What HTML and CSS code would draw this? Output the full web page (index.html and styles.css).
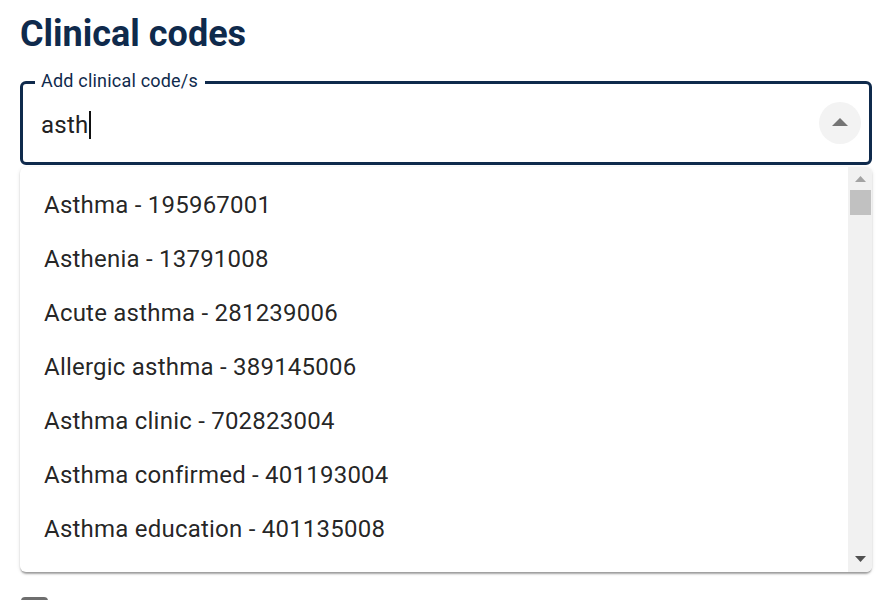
FILE: index.html
```html
<!DOCTYPE html>
<html lang="en">
<head>
<meta charset="utf-8">
<title>Clinical codes</title>
<link rel="stylesheet" href="styles.css">
</head>
<body>
<main class="page">
  <h1 class="title">Clinical codes</h1>
  <fieldset class="field">
    <legend class="field-label">Add clinical code/s</legend>
    <div class="field-row">
      <div class="field-input"><span class="typed">asth</span><span class="caret"></span></div>
      <button class="toggle" type="button" aria-label="Close">
        <svg width="16" height="8" viewBox="0 0 16 8"><path d="M0 8 L8 0 L16 8 Z" fill="#757575"/></svg>
      </button>
    </div>
  </fieldset>
  <div class="menu">
    <ul class="options">
      <li class="option">Asthma - 195967001</li>
      <li class="option">Asthenia - 13791008</li>
      <li class="option">Acute asthma - 281239006</li>
      <li class="option">Allergic asthma - 389145006</li>
      <li class="option">Asthma clinic - 702823004</li>
      <li class="option">Asthma confirmed - 401193004</li>
      <li class="option">Asthma education - 401135008</li>
    </ul>
    <div class="scrollbar">
      <svg class="arrow" width="11" height="6" viewBox="0 0 11 6"><path d="M0 6 L5.5 0 L11 6 Z" fill="#a3a3a3"/></svg>
      <div class="thumb"></div>
      <div class="track-fill"></div>
      <svg class="arrow" width="11" height="6" viewBox="0 0 11 6"><path d="M0 0 L5.5 6 L11 0 Z" fill="#505050"/></svg>
    </div>
  </div>
  <div class="checkbox"></div>
</main>
</body>
</html>
```
FILE: styles.css
```css
* { box-sizing: border-box; }
html, body { margin: 0; padding: 0; background: #fff; }
body {
  font-family: Roboto, "Noto Sans", "Liberation Sans", sans-serif;
  height: 600px;
  overflow: hidden;
}
.page {
  padding: 0 15px 0 20px;
  width: 887px;
  display: flex;
  flex-direction: column;
}
.title {
  margin: 13px 0 15px 0;
  font-size: 36px;
  line-height: 42px;
  font-weight: 700;
  color: #0f2a4c;
}
.field {
  margin: 0;
  padding: 0 8px 11px 18px;
  border: 3px solid #0f2a4c;
  border-radius: 6px;
  min-width: 0;
}
.field-label {
  margin-left: -6px;
  padding: 0 7px 4px 6px;
  font-size: 18px;
  line-height: 21px;
  letter-spacing: 0.2px;
  color: #0f2a4c;
}
.field-row {
  height: 56px;
  display: flex;
  align-items: center;
  justify-content: space-between;
}
.field-input {
  display: flex;
  align-items: center;
  padding-top: 4px;
  font-size: 24px;
  line-height: 28px;
  letter-spacing: 0.225px;
  color: #222;
}
.caret {
  width: 2px;
  height: 28px;
  margin-left: 1px;
  background: #111;
}
.toggle {
  width: 42px;
  height: 42px;
  border: 0;
  border-radius: 50%;
  background: #f3f3f3;
  display: flex;
  align-items: center;
  justify-content: center;
  padding: 0 0 2px 0;
}
.menu {
  margin-top: 2px;
  height: 405px;
  display: flex;
  border-radius: 6px;
  overflow: hidden;
  background: #fff;
  box-shadow: 0 3px 2px -1px rgba(0,0,0,0.28), 0 1px 2px rgba(0,0,0,0.12), 0 1px 4px rgba(0,0,0,0.10);
}
.options {
  flex: 1;
  margin: 0;
  padding: 11px 0 0 0;
  list-style: none;
}
.option {
  height: 54px;
  padding: 0 24px;
  display: flex;
  align-items: center;
  font-size: 24px;
  line-height: 36px;
  letter-spacing: 0.225px;
  color: rgba(0,0,0,0.87);
}
.scrollbar {
  width: 24px;
  background: #f1f1f1;
  display: flex;
  flex-direction: column;
  align-items: center;
  padding: 9px 0 10px 0;
}
.arrow { flex: none; display: block; }
.thumb {
  margin-top: 8px;
  width: 21px;
  height: 25px;
  background: #c1c1c1;
}
.track-fill { flex: 1; }
.checkbox {
  margin-top: 25px;
  margin-left: 1px;
  width: 27px;
  height: 27px;
  border: 3px solid #6e6e6e;
  border-radius: 4px;
  flex: none;
}
```
